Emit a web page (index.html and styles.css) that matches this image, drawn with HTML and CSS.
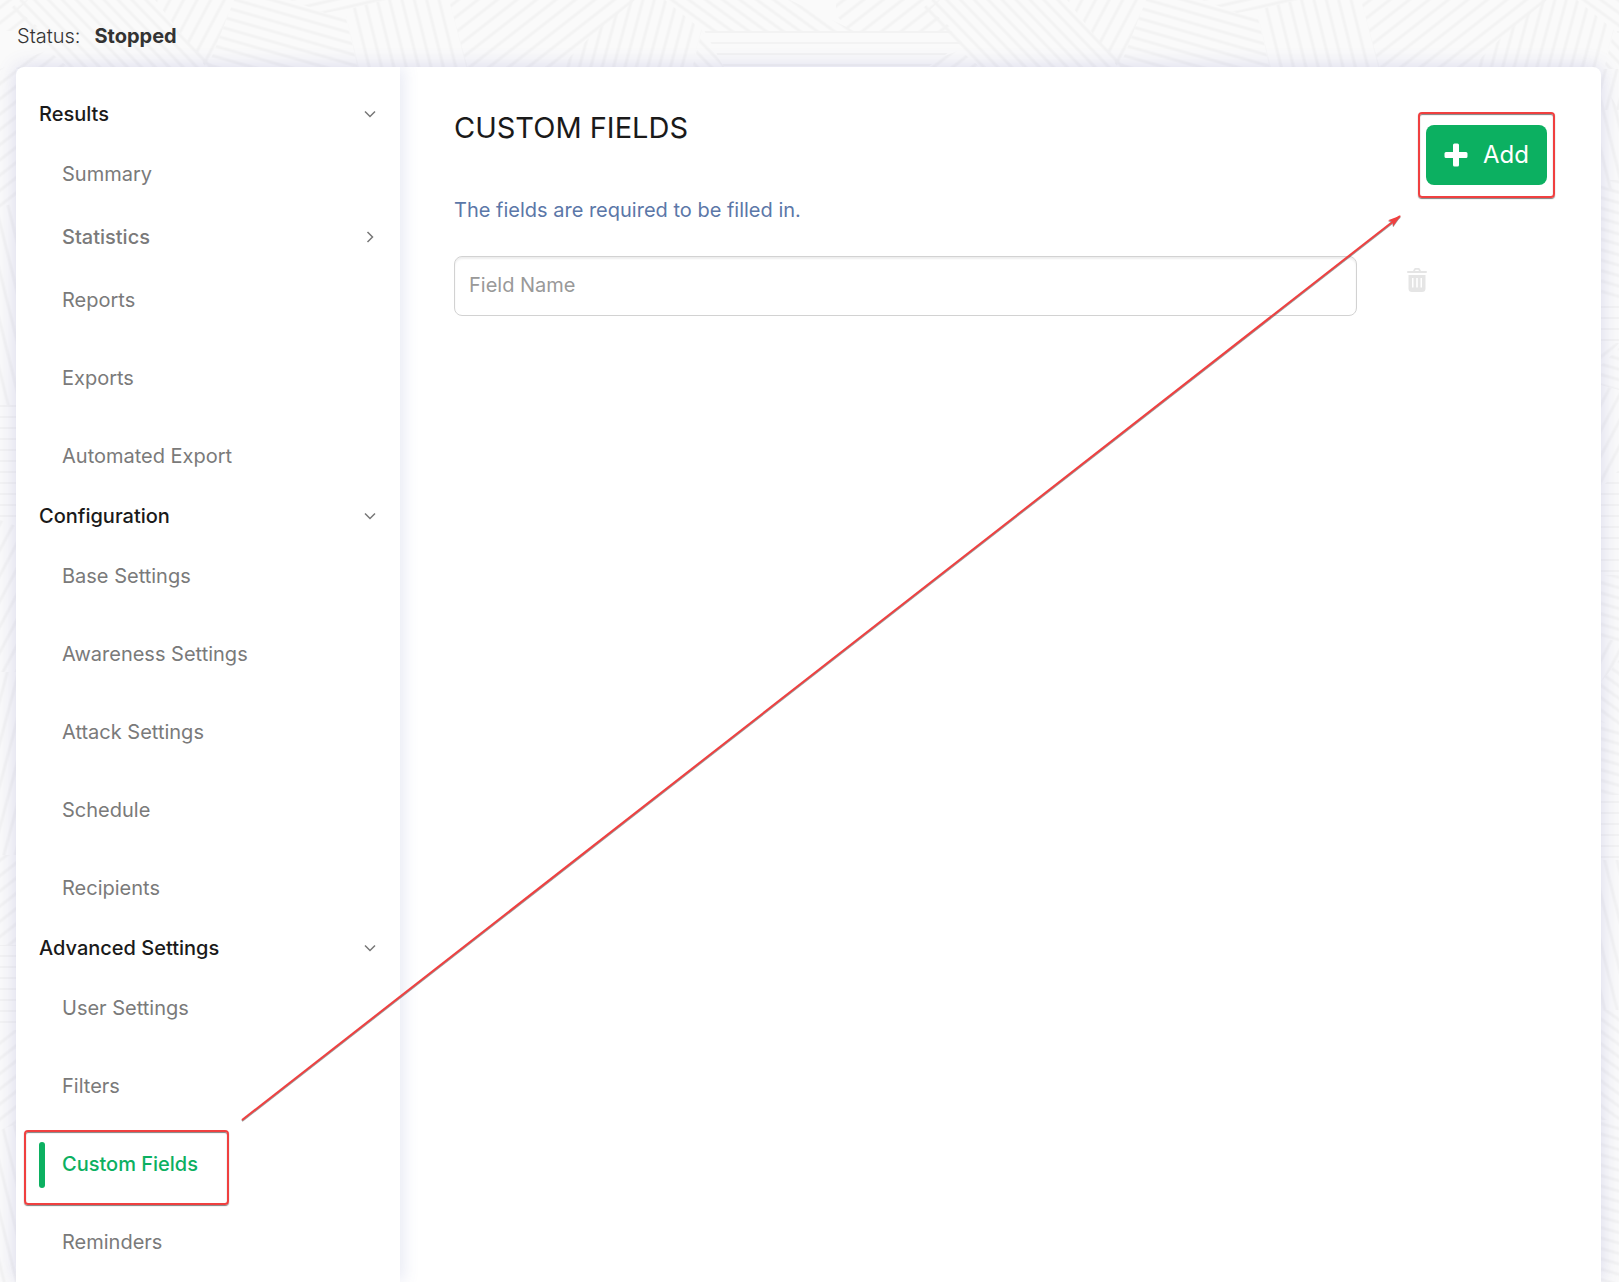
FILE: index.html
```
<!DOCTYPE html>
<html lang="en">
<head>
  <meta charset="utf-8">
  <meta name="viewport" content="width=device-width, initial-scale=1">
  <title>Custom Fields</title>
  <link rel="stylesheet" href="styles.css">
</head>
<body>
  <svg class="backdrop" aria-hidden="true">
    <defs>
      <pattern id="p0" width="11" height="11" patternUnits="userSpaceOnUse" patternTransform="translate(0 9)"><path class="hatch" d="M0 0.5H11"/></pattern>
      <pattern id="p46" width="10" height="10" patternUnits="userSpaceOnUse" patternTransform="rotate(46)"><path class="hatch" d="M0 5H10"/></pattern>
      <pattern id="n62" width="12" height="12" patternUnits="userSpaceOnUse" patternTransform="rotate(-62)"><path class="hatch" d="M0 6H12"/></pattern>
      <pattern id="p16" width="10" height="10" patternUnits="userSpaceOnUse" patternTransform="rotate(16)"><path class="hatch" d="M0 5H10"/></pattern>
      <pattern id="n13" width="10" height="10" patternUnits="userSpaceOnUse" patternTransform="rotate(-13)"><path class="hatch" d="M0 5H10"/></pattern>
      <pattern id="p76" width="12" height="12" patternUnits="userSpaceOnUse" patternTransform="rotate(76)"><path class="hatch" d="M0 6H12"/></pattern>
      <pattern id="n38" width="12" height="12" patternUnits="userSpaceOnUse" patternTransform="rotate(-38)"><path class="hatch" d="M0 6H12"/></pattern>
      <pattern id="n75" width="11" height="11" patternUnits="userSpaceOnUse" patternTransform="rotate(-75)"><path class="hatch" d="M0 5H11"/></pattern>
      <pattern id="p36" width="10" height="10" patternUnits="userSpaceOnUse" patternTransform="rotate(36)"><path class="hatch" d="M0 5H10"/></pattern>
      <g id="tile">
        <path fill="url(#p46)" d="M10 9 20 0H155L218 69H70Z"/>
        <path fill="url(#n38)" d="M-76 0H28L18 10 43 31H-62L-76 15Z"/>
        <path fill="url(#n38)" d="M0 69 48 50 70 69Z"/>
        <path fill="url(#n62)" d="M155 0H234L207 69 195 52Z"/>
        <path fill="url(#p16)" d="M234 0H290L345 14 358 69H207Z"/>
        <path fill="url(#n13)" d="M290 0H400L325 13Z"/>
        <path fill="url(#p76)" d="M345 10 385 0H449L468 69H358Z"/>
        <path fill="url(#n38)" d="M449 0H635L555 69H468Z"/>
        <path fill="url(#n75)" d="M630 0H665L702 30 690 69H558L590 37Z"/>
        <path fill="url(#p36)" d="M667 0H790L855 31H707Z"/>
        <path fill="url(#p46)" d="M702 31 725 69H692Z"/>
        <path fill="url(#p0)" d="M704 30H950L962 43 925 69H725Z"/>
      </g>
    </defs>
    <use href="#tile"/>
    <use href="#tile" x="912"/>
    <g>
      <path fill="url(#n38)" d="M0 69H16V202L0 208Z"/>
      <path fill="url(#p76)" d="M0 208 16 202V405H0Z"/>
      <path fill="url(#p0)" d="M0 405H16V526L0 520Z"/>
      <path fill="url(#n62)" d="M0 520 16 526V672H0Z"/>
      <path fill="url(#n75)" d="M0 672H16V855H0Z"/>
      <path fill="url(#n38)" d="M0 855H16V945H0Z"/>
      <path fill="url(#p0)" d="M0 945H16V1030H0Z"/>
      <path fill="url(#n38)" d="M0 1030H16V1124L0 1130Z"/>
      <path fill="url(#p76)" d="M0 1130 16 1124V1400H0Z"/>
    </g>
    <svg x="100%" class="edge">
      <path fill="url(#n75)" d="M-32 69H0V110H-18Z"/>
      <path fill="url(#p76)" d="M-18 80 0 110V190H-18Z"/>
      <path fill="url(#p16)" d="M-18 180H0V300H-18Z"/>
      <path fill="url(#p0)" d="M-18 300H0V343H-18Z"/>
      <path fill="url(#n38)" d="M-18 343H0L-18 365Z"/>
      <path fill="url(#p16)" d="M-18 365 0 348V390L-18 385Z"/>
      <path fill="url(#n62)" d="M-18 385 0 390V460L-18 488Z"/>
      <path fill="url(#p0)" d="M-18 488 0 470V575H-18Z"/>
      <path fill="url(#p16)" d="M-18 575H0V642L-18 637Z"/>
      <path fill="url(#n62)" d="M-18 637 0 642V660L-18 682Z"/>
      <path fill="url(#p36)" d="M-18 682 0 660V727L-18 722Z"/>
      <path fill="url(#p16)" d="M-18 722 0 727V795H-18Z"/>
      <path fill="url(#p0)" d="M-18 795H0V860H-18Z"/>
      <path fill="url(#p76)" d="M-18 860H0V1010H-18Z"/>
      <path fill="url(#p36)" d="M-18 1010H0V1120H-18Z"/>
      <path fill="url(#p16)" d="M-18 1120H0V1400H-18Z"/>
    </svg>
  </svg>

  <header class="status">
    <span>Status:</span>
    <strong>Stopped</strong>
  </header>

  <div class="card">
    <nav class="sidebar" aria-label="Campaign">
      <section>
        <button class="group" type="button" aria-expanded="true">Results
          <svg class="chevron" viewBox="0 0 12 12" aria-hidden="true"><path d="M1 3.5 6 8.5 11 3.5"/></svg>
        </button>
        <ul>
          <li class="item"><a href="#summary">Summary</a></li>
          <li class="item compact"><button class="subgroup" type="button" aria-expanded="false">Statistics
            <svg class="chevron" viewBox="0 0 12 12" aria-hidden="true"><path d="M3.5 1 8.5 6 3.5 11"/></svg>
          </button></li>
          <li class="item"><a href="#reports">Reports</a></li>
          <li class="item"><a href="#exports">Exports</a></li>
          <li class="item"><a href="#automated">Automated Export</a></li>
        </ul>
      </section>
      <section>
        <button class="group" type="button" aria-expanded="true">Configuration
          <svg class="chevron" viewBox="0 0 12 12" aria-hidden="true"><path d="M1 3.5 6 8.5 11 3.5"/></svg>
        </button>
        <ul>
          <li class="item"><a href="#base">Base Settings</a></li>
          <li class="item"><a href="#awareness">Awareness Settings</a></li>
          <li class="item"><a href="#attack">Attack Settings</a></li>
          <li class="item"><a href="#schedule">Schedule</a></li>
          <li class="item"><a href="#recipients">Recipients</a></li>
        </ul>
      </section>
      <section>
        <button class="group" type="button" aria-expanded="true">Advanced Settings
          <svg class="chevron" viewBox="0 0 12 12" aria-hidden="true"><path d="M1 3.5 6 8.5 11 3.5"/></svg>
        </button>
        <ul>
          <li class="item"><a href="#user">User Settings</a></li>
          <li class="item"><a href="#filters">Filters</a></li>
          <li class="item active"><a href="#custom" aria-current="page">Custom Fields</a><span class="callout callout-item"></span></li>
          <li class="item"><a href="#reminders">Reminders</a></li>
        </ul>
      </section>
    </nav>

    <main class="content">
      <div class="heading">
        <h1>CUSTOM FIELDS</h1>
        <div class="action">
          <button class="add" type="button">
            <svg class="plus" viewBox="0 0 24 24" aria-hidden="true"><path d="M10.500 0.500h3q1.500 0 1.500 1.500v7h7q1.500 0 1.500 1.500v3q0 1.500-1.500 1.500h-7v7q0 1.500-1.500 1.500h-3q-1.500 0-1.500-1.500v-7h-7q-1.500 0-1.500-1.500v-3q0-1.500 1.500-1.500h7v-7q0-1.500 1.500-1.500z"/></svg>
            Add
          </button>
          <span class="callout callout-add"></span>
        </div>
      </div>
      <p class="hint">The fields are required to be filled in.</p>
      <div class="row">
        <input class="field" type="text" placeholder="Field Name" aria-label="Field Name">
        <button class="delete" type="button" aria-label="Delete field">
          <svg class="trash" viewBox="0 0 20 24" aria-hidden="true"><path fill-rule="evenodd" d="M6 3 7 1Q7.500 0 8.500 0h3q1 0 1.500 1l1 2h5q1 0 1 1t-1 1H1Q0 5 0 4t1-1zM8 3h4l-.7-1.300H8.700zM1.500 7h17v13.500q0 3.500-3.500 3.500H5q-3.500 0-3.500-3.500zM5 10v9.500h1.500V10zM9.200 10v9.500h1.600V10zM13.500 10v9.500H15V10z"/></svg>
        </button>
      </div>
    </main>

    <svg class="arrow" aria-hidden="true">
      <defs>
        <marker id="tip" viewBox="0 0 13 8" refX="12" refY="4" markerWidth="13" markerHeight="8" markerUnits="userSpaceOnUse" orient="auto"><path d="M0 0 13 4 0 8 2.500 4z"/></marker>
      </defs>
      <line x1="0" y1="100%" x2="100%" y2="0" marker-end="url(#tip)"/>
    </svg>
  </div>
</body>
</html>
```
FILE: styles.css
```
* {
  box-sizing: border-box;
}

body {
  position: relative;
  display: flex;
  flex-direction: column;
  min-height: 100vh;
  margin: 0;
  padding: 0 18px 0 16px;
  background: #fafafa;
  color: #333;
  font: 20px/30px Inter, "Open Sans", sans-serif;
}

button {
  border: 0;
  background: none;
  color: inherit;
  font: inherit;
  cursor: pointer;
}

.backdrop {
  position: absolute;
  inset: 0;
  z-index: -1;
  width: 100%;
  height: 100%;
}

.edge {
  overflow: visible;
}

.hatch {
  fill: none;
  stroke: #f3f3f3;
  stroke-width: 3;
}

.status {
  display: flex;
  gap: 14px;
  padding: 21px 1px 16px;
  font-weight: 300;
}

.status strong {
  font-weight: 700;
}

.card {
  position: relative;
  display: flex;
  flex: 1;
  border-radius: 8px 8px 0 0;
  background: #fff;
  box-shadow: 0 0 20px rgba(80, 80, 180, 0.2);
}

.sidebar {
  flex: 0 0 384px;
  padding-top: 26px;
  border-radius: 8px 0 0 0;
  box-shadow: 4px 0 16px rgba(80, 90, 170, 0.13);
  clip-path: inset(0 -24px 0 0);
}

.sidebar ul {
  margin: 0;
  padding: 0;
  list-style: none;
}

.group,
.subgroup {
  display: flex;
  align-items: center;
  justify-content: space-between;
  width: 100%;
  text-align: left;
}

.group {
  height: 42px;
  padding: 0 24px 0 23px;
  color: #1a1a1a;
  font-weight: 500;
}

.subgroup {
  padding: 0;
  font-weight: 500;
}

.chevron {
  width: 12px;
  height: 12px;
  fill: none;
  stroke: #777;
  stroke-width: 1.5;
}

.item {
  position: relative;
  padding: 24px 24px 24px 46px;
  color: #7a7a7a;
}

.item.compact {
  padding-top: 9px;
  padding-bottom: 9px;
}

.item a {
  display: block;
  color: inherit;
  text-decoration: none;
}

.item.active {
  color: #0cb061;
  font-weight: 500;
}

.item.active::before {
  content: "";
  position: absolute;
  top: 17px;
  left: 23px;
  width: 6px;
  height: 46px;
  border-radius: 3px;
  background: #0cb061;
}

.callout {
  position: absolute;
  border: 2px solid #f04040;
  border-radius: 4px;
  box-shadow: 0 1px 1px rgba(0, 0, 0, 0.5), inset 0 1px 1px rgba(0, 0, 0, 0.5);
  pointer-events: none;
}

.callout-item {
  top: 5px;
  bottom: -2px;
  left: 8px;
  width: 205px;
}

.callout-add {
  inset: -13px -8px;
}

.content {
  flex: 1;
  min-width: 0;
  padding: 43px 54px 40px;
}

.heading {
  display: flex;
  align-items: flex-start;
  justify-content: space-between;
}

h1 {
  margin: 0;
  color: #1a1a1a;
  font-size: 29px;
  font-weight: 400;
  line-height: 36px;
}

.action {
  position: relative;
  margin-top: 15px;
}

.add {
  display: flex;
  align-items: center;
  gap: 15px;
  height: 60px;
  padding: 0 18px;
  border-radius: 8px;
  background: #0cb061;
  color: #fff;
  font-size: 24px;
}

.plus {
  width: 24px;
  height: 24px;
  fill: #fff;
}

.hint {
  margin: 10px 0 31px;
  color: #5b77a8;
}

.row {
  display: grid;
  grid-template-columns: 1fr 140px;
  align-items: start;
  gap: 50px;
}

.field {
  width: 100%;
  height: 60px;
  padding: 0 14px 2px;
  border: 1px solid #d2d2d2;
  border-radius: 8px;
  background: #fff;
  box-shadow: inset 0 2px 2px rgba(0, 0, 0, 0.07);
  color: #333;
  font: inherit;
}

.field::placeholder {
  color: #999;
  opacity: 1;
}

.delete {
  justify-self: start;
  padding: 12px 0;
  line-height: 0;
}

.trash {
  width: 20px;
  height: 24px;
  fill: #e5e5e5;
}

.arrow {
  position: absolute;
  top: 149px;
  left: 226px;
  width: calc(100% - 427px);
  height: calc(100% - 311px);
  overflow: visible;
  fill: #f04040;
  stroke-width: 2;
  filter: drop-shadow(0 1px 0 rgba(0, 0, 0, 0.4));
  pointer-events: none;
}

.arrow line {
  stroke: #f04040;
}
```
